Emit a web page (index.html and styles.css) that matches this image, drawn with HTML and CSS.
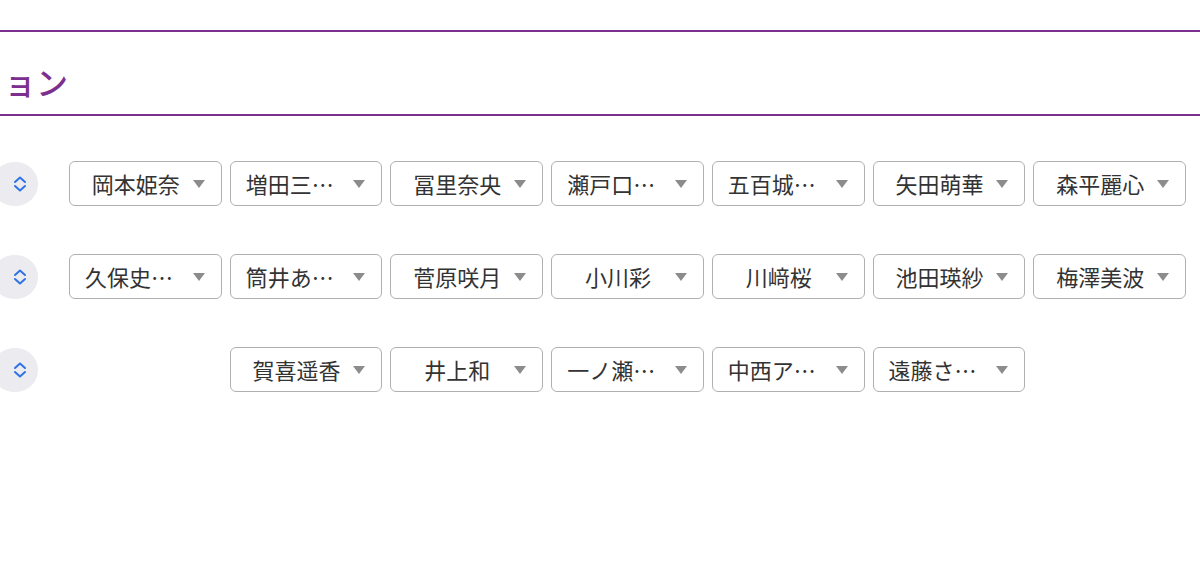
FILE: index.html
```html
<!DOCTYPE html>
<html lang="ja">
<head>
    <meta charset="UTF-8">
    <meta name="viewport" content="width=device-width, initial-scale=1.0">
    <title>ポジション</title>
    <link rel="stylesheet" href="styles.css">
</head>
<body>
    <section class="title">
        <h2>ョン</h2>
    </section>
    <main class="rows">
        <div class="row">
            <button class="stepper" aria-label="並び替え">
                <svg width="12" height="16" viewBox="0 0 12 16"><path d="M1 6 L6 1.5 L11 6 M1 10 L6 14.5 L11 10" fill="none" stroke="#2f74e6" stroke-width="2" stroke-linecap="round" stroke-linejoin="round"/></svg>
            </button>
            <div class="slots">
                <div class="pick"><span class="name">岡本姫奈</span><i class="arrow"></i></div>
                <div class="pick" title="増田三莉音"><span class="name cut">増田三…</span><i class="arrow"></i></div>
                <div class="pick"><span class="name">冨里奈央</span><i class="arrow"></i></div>
                <div class="pick" title="瀬戸口心月"><span class="name cut">瀬戸口…</span><i class="arrow"></i></div>
                <div class="pick" title="五百城茉央"><span class="name cut">五百城…</span><i class="arrow"></i></div>
                <div class="pick"><span class="name">矢田萌華</span><i class="arrow"></i></div>
                <div class="pick"><span class="name">森平麗心</span><i class="arrow"></i></div>
            </div>
        </div>
        <div class="row">
            <button class="stepper" aria-label="並び替え">
                <svg width="12" height="16" viewBox="0 0 12 16"><path d="M1 6 L6 1.5 L11 6 M1 10 L6 14.5 L11 10" fill="none" stroke="#2f74e6" stroke-width="2" stroke-linecap="round" stroke-linejoin="round"/></svg>
            </button>
            <div class="slots">
                <div class="pick" title="久保史緒里"><span class="name cut">久保史…</span><i class="arrow"></i></div>
                <div class="pick" title="筒井あやめ"><span class="name cut">筒井あ…</span><i class="arrow"></i></div>
                <div class="pick"><span class="name">菅原咲月</span><i class="arrow"></i></div>
                <div class="pick"><span class="name">小川彩</span><i class="arrow"></i></div>
                <div class="pick"><span class="name">川﨑桜</span><i class="arrow"></i></div>
                <div class="pick"><span class="name">池田瑛紗</span><i class="arrow"></i></div>
                <div class="pick"><span class="name">梅澤美波</span><i class="arrow"></i></div>
            </div>
        </div>
        <div class="row">
            <button class="stepper" aria-label="並び替え">
                <svg width="12" height="16" viewBox="0 0 12 16"><path d="M1 6 L6 1.5 L11 6 M1 10 L6 14.5 L11 10" fill="none" stroke="#2f74e6" stroke-width="2" stroke-linecap="round" stroke-linejoin="round"/></svg>
            </button>
            <div class="slots">
                <div class="pick empty"></div>
                <div class="pick"><span class="name">賀喜遥香</span><i class="arrow"></i></div>
                <div class="pick"><span class="name">井上和</span><i class="arrow"></i></div>
                <div class="pick" title="一ノ瀬美空"><span class="name cut">一ノ瀬…</span><i class="arrow"></i></div>
                <div class="pick" title="中西アルノ"><span class="name cut">中西ア…</span><i class="arrow"></i></div>
                <div class="pick" title="遠藤さくら"><span class="name cut">遠藤さ…</span><i class="arrow"></i></div>
            </div>
        </div>
    </main>
</body>
</html>
```

FILE: styles.css
```css
body {
    font-family: "Noto Sans CJK JP", "Noto Sans", sans-serif;
    margin: 0;
    padding: 0;
    background-color: #fff;
    color: #333;
    overflow: hidden;
}
.title {
    margin-top: 30px;
    border-top: 2px solid #7d2f90;
    border-bottom: 2px solid #7d2f90;
    height: 82px;
}
.title h2 {
    margin: 0;
    padding-top: 28px;
    padding-left: 4px;
    font-size: 32px;
    line-height: 42px;
    font-weight: 500;
    color: #7d2f90;
    white-space: nowrap;
}
.rows {
    display: flex;
    flex-direction: column;
    gap: 48px;
    padding-top: 45px;
}
.row {
    display: flex;
    align-items: center;
    height: 45px;
}
.stepper {
    flex: 0 0 auto;
    width: 46px;
    height: 44px;
    margin-left: -8px;
    padding: 0 0 0 10px;
    border: none;
    border-radius: 22px;
    background-color: #ebebf0;
    display: flex;
    align-items: center;
    justify-content: center;
    cursor: pointer;
}
.stepper svg {
    display: block;
}
.slots {
    margin-left: 31px;
    width: 1117px;
    display: grid;
    grid-template-columns: repeat(7, minmax(0, 1fr));
    column-gap: 8px;
}
.pick {
    min-width: 0;
    height: 45px;
    box-sizing: border-box;
    border: 1.5px solid #b0b0b0;
    border-radius: 6px;
    display: flex;
    align-items: center;
    background-color: #fff;
}
.pick.empty {
    visibility: hidden;
}
.name {
    flex: 1;
    min-width: 0;
    margin-left: 13px;
    padding-bottom: 2px;
    font-size: 22px;
    line-height: 30px;
    text-align: center;
    white-space: nowrap;
    color: #333;
}
.name.cut {
    text-align: left;
    padding-left: 2px;
}
.arrow {
    flex: 0 0 auto;
    width: 0;
    height: 0;
    margin: 0 16px 0 4px;
    border-left: 6px solid transparent;
    border-right: 6px solid transparent;
    border-top: 8px solid #8c8c8c;
}
```
